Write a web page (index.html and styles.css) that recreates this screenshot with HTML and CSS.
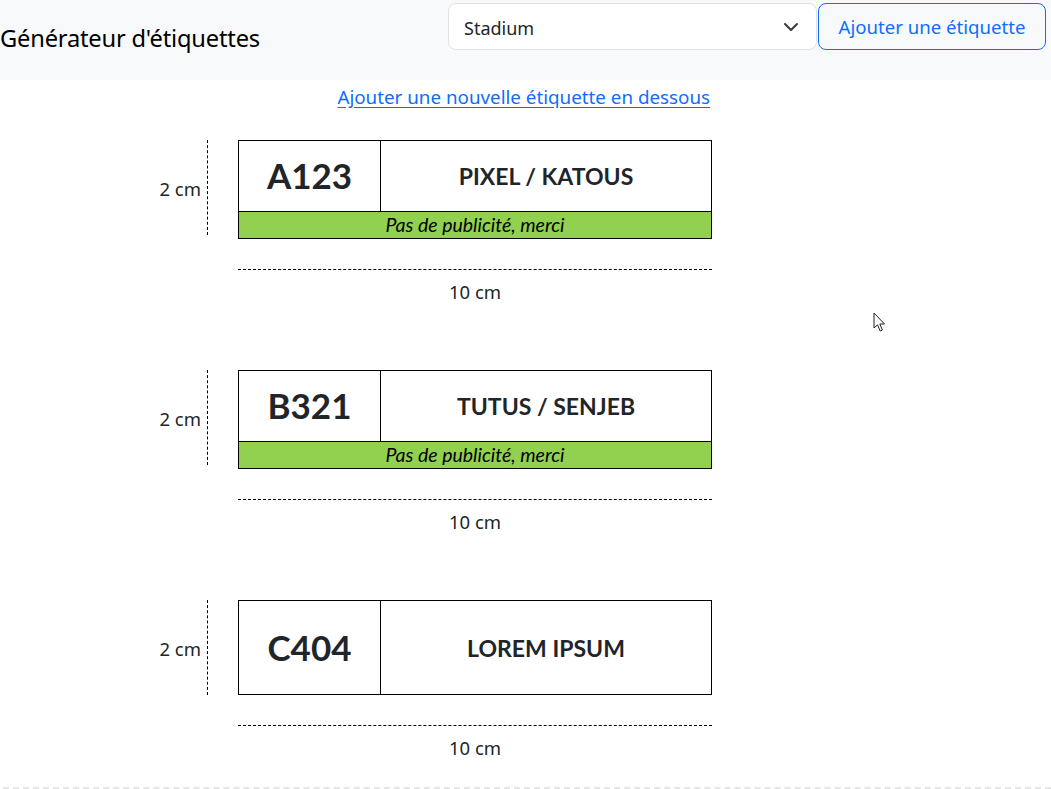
FILE: index.html
```html
<!DOCTYPE html>
<html lang="fr">
<head>
<meta charset="utf-8">
<title>Générateur d'étiquettes</title>
<link rel="stylesheet" href="styles.css">
</head>
<body>
<header class="topbar">
  <h1 class="title">Générateur d'étiquettes</h1>
  <div class="controls">
    <div class="select-wrap">
      <select class="select">
        <option>Stadium</option>
      </select>
      <svg class="chevron" width="16" height="16" viewBox="0 0 16 16"><path d="M2 5l6 6 6-6" fill="none" stroke="#343a40" stroke-width="2" stroke-linecap="round" stroke-linejoin="round"/></svg>
    </div>
    <button class="btn-add" type="button">Ajouter une étiquette</button>
  </div>
</header>

<main class="sheet">
  <div class="link-row">
    <a href="#" class="add-link">Ajouter une nouvelle étiquette en dessous</a>
  </div>

  <section class="block">
    <div class="vruler"><span class="vtext">2 cm</span><span class="vline"></span></div>
    <div class="label">
      <div class="label-main">
        <div class="code">A123</div>
        <div class="name">PIXEL / KATOUS</div>
      </div>
      <div class="strip">Pas de publicité, merci</div>
    </div>
    <div class="hruler">10 cm</div>
  </section>

  <section class="block">
    <div class="vruler"><span class="vtext">2 cm</span><span class="vline"></span></div>
    <div class="label">
      <div class="label-main">
        <div class="code">B321</div>
        <div class="name">TUTUS / SENJEB</div>
      </div>
      <div class="strip">Pas de publicité, merci</div>
    </div>
    <div class="hruler">10 cm</div>
  </section>

  <section class="block">
    <div class="vruler"><span class="vtext">2 cm</span><span class="vline"></span></div>
    <div class="label">
      <div class="label-main">
        <div class="code">C404</div>
        <div class="name">LOREM IPSUM</div>
      </div>
    </div>
    <div class="hruler">10 cm</div>
  </section>

  <div class="page-break"></div>
</main>

<svg class="cursor" width="14" height="22" viewBox="0 0 14 22"><path d="M1 1 L1 16 L4.5 12.8 L7.2 19 L9.4 18 L6.8 12 L11.5 12 Z" fill="#fff" stroke="#222" stroke-width="1" stroke-linejoin="miter"/></svg>
</body>
</html>
```

FILE: styles.css
```css
* { box-sizing: border-box; }

html, body {
  margin: 0;
  padding: 0;
  background: #fff;
}

body {
  font-family: "Noto Sans", "Open Sans", sans-serif;
  color: #212529;
  position: relative;
  min-height: 789px;
  overflow: hidden;
}

.topbar {
  display: flex;
  justify-content: space-between;
  align-items: flex-start;
  height: 80px;
  background: #f8f9fa;
  padding: 3px 5px 0 0;
}

.title {
  margin: 0 0 7px;
  align-self: center;
  font-size: 23.7px;
  font-weight: 400;
  line-height: 1.2;
  color: #000;
  letter-spacing: -0.2px;
}

.controls {
  display: flex;
  gap: 1px;
}

.select-wrap {
  position: relative;
  width: 369px;
}

.select {
  appearance: none;
  -webkit-appearance: none;
  width: 100%;
  height: 47px;
  border: 1px solid #dee2e6;
  border-radius: 8px;
  background: #fff;
  padding: 2px 40px 0 15px;
  font-family: inherit;
  font-size: 18px;
  color: #212529;
}

.chevron {
  position: absolute;
  right: 18px;
  top: 16px;
  pointer-events: none;
}

.btn-add {
  height: 47px;
  width: 228px;
  border: 1px solid #0d6efd;
  border-radius: 8px;
  background: transparent;
  color: #0d6efd;
  font-family: inherit;
  font-size: 18.6px;
  padding: 0 6px;
  white-space: nowrap;
}

.sheet {
  display: flex;
  flex-direction: column;
}

.link-row {
  width: 710px;
  text-align: right;
  padding-top: 4px;
  height: 60px;
}

.add-link {
  color: #0d6efd;
  font-size: 18.8px;
  line-height: 26px;
  text-decoration: underline;
  text-underline-offset: 3px;
}

.block {
  display: grid;
  grid-template-columns: 238px 474px;
  grid-template-rows: auto auto;
  margin-bottom: 66px;
}

.vruler {
  display: flex;
  justify-content: flex-end;
  align-items: center;
  height: 95px;
  padding-right: 30px;
}

.vtext {
  font-size: 18.5px;
  margin-right: 6px;
  padding-top: 1px;
}

.vline {
  align-self: stretch;
  border-right: 1px dashed #000;
}

.label {
  display: flex;
  flex-direction: column;
  min-height: 95px;
  border: 1px solid #000;
  font-family: Lato, "Liberation Sans", sans-serif;
  color: #212529;
}

.label-main {
  flex: 1;
  display: flex;
  min-height: 70px;
}

.code {
  width: 142px;
  border-right: 1px solid #000;
  display: flex;
  align-items: center;
  justify-content: center;
  font-size: 35px;
  font-weight: 700;
  padding-bottom: 2px;
}

.name {
  flex: 1;
  display: flex;
  align-items: center;
  justify-content: center;
  font-size: 23px;
  font-weight: 700;
}

.strip {
  height: 27px;
  border-top: 1px solid #000;
  background: #92d050;
  text-align: center;
  font-style: italic;
  font-size: 19.5px;
  line-height: 26px;
  color: #000;
}

.hruler {
  grid-column: 2;
  margin-top: 30px;
  border-top: 1px dashed #000;
  text-align: center;
  font-size: 18.5px;
  line-height: 24px;
  padding-top: 10px;
}

.page-break {
  position: absolute;
  left: 3px;
  right: 0;
  top: 787px;
  border-top: 2px dashed #e5e5e5;
}

.cursor {
  position: absolute;
  left: 873px;
  top: 312px;
}
```
